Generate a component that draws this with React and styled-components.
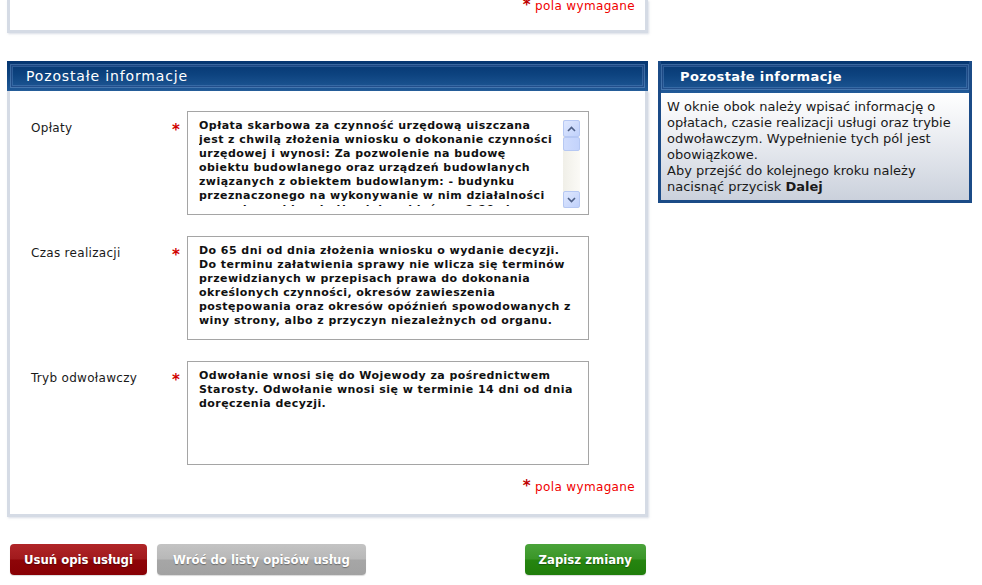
import styled, { createGlobalStyle } from "styled-components";

const GlobalStyle = createGlobalStyle`
  html, body {
    margin: 0;
    padding: 0;
    background: #ffffff;
    font-family: "DejaVu Sans", Verdana, sans-serif;
  }
`;

const fees = [
  "Opłata skarbowa za czynność urzędową uiszczana",
  "jest z chwilą złożenia wniosku o dokonanie czynności",
  "urzędowej i wynosi: Za pozwolenie na budowę",
  "obiektu budowlanego oraz urządzeń budowlanych",
  "związanych z obiektem budowlanym: - budynku",
  "przeznaczonego na wykonywanie w nim działalności",
  "gospodarczej innej niż rolnicza i leśna - 2,20 zł",
];

const time = [
  "Do 65 dni od dnia złożenia wniosku o wydanie decyzji.",
  "Do terminu załatwienia sprawy nie wlicza się terminów",
  "przewidzianych w przepisach prawa do dokonania",
  "określonych czynności, okresów zawieszenia",
  "postępowania oraz okresów opóźnień spowodowanych z",
  "winy strony, albo z przyczyn niezależnych od organu.",
];

const appeal = [
  "Odwołanie wnosi się do Wojewody za pośrednictwem",
  "Starosty. Odwołanie wnosi się w terminie 14 dni od dnia",
  "doręczenia decyzji.",
];

const App = () => {
  return (
    <>
      <GlobalStyle />
      <Page>
        <MainColumn>
          <TopPanel>
            <RequiredNote $top>
              <Star>*</Star> pola wymagane
            </RequiredNote>
          </TopPanel>

          <Panel>
            <Header>
              <HeaderInner>Pozostałe informacje</HeaderInner>
            </Header>
            <Body>
              <Row>
                <Label>Opłaty</Label>
                <ReqStar>*</ReqStar>
                <Field>
                  <FieldText $clip>
                    {fees.map((l) => (
                      <Line key={l}>{l}</Line>
                    ))}
                  </FieldText>
                  <Scrollbar>
                    <ScrollButton>
                      <svg width="9" height="6" viewBox="0 0 9 6">
                        <path d="M1 5 L4.5 1.5 L8 5" fill="none" stroke="#4d5f86" strokeWidth="1.6" />
                      </svg>
                    </ScrollButton>
                    <Thumb />
                    <Track />
                    <ScrollButton>
                      <svg width="9" height="6" viewBox="0 0 9 6">
                        <path d="M1 1 L4.5 4.5 L8 1" fill="none" stroke="#4d5f86" strokeWidth="1.6" />
                      </svg>
                    </ScrollButton>
                  </Scrollbar>
                </Field>
              </Row>
              <Row>
                <Label>Czas realizacji</Label>
                <ReqStar>*</ReqStar>
                <Field>
                  <FieldText>
                    {time.map((l) => (
                      <Line key={l}>{l}</Line>
                    ))}
                  </FieldText>
                </Field>
              </Row>
              <Row>
                <Label>Tryb odwoławczy</Label>
                <ReqStar>*</ReqStar>
                <Field>
                  <FieldText>
                    {appeal.map((l) => (
                      <Line key={l}>{l}</Line>
                    ))}
                  </FieldText>
                </Field>
              </Row>
              <RequiredNote>
                <Star>*</Star> pola wymagane
              </RequiredNote>
            </Body>
          </Panel>

          <Actions>
            <Button $variant="red">Usuń opis usługi</Button>
            <Button $variant="gray">Wróć do listy opisów usług</Button>
            <Button $variant="green" $push>
              Zapisz zmiany
            </Button>
          </Actions>
        </MainColumn>

        <SideBox>
          <SideHeader>
            <HeaderInner $side>Pozostałe informacje</HeaderInner>
          </SideHeader>
          <SideBody>
            <Line>W oknie obok należy wpisać informację o</Line>
            <Line>opłatach, czasie realizacji usługi oraz trybie</Line>
            <Line>odwoławczym. Wypełnienie tych pól jest</Line>
            <Line>obowiązkowe.</Line>
            <Line>Aby przejść do kolejnego kroku należy</Line>
            <Line>
              nacisnąć przycisk <b>Dalej</b>
            </Line>
          </SideBody>
        </SideBox>
      </Page>
    </>
  );
};

export default App;

const Page = styled.div`
  display: flex;
  align-items: flex-start;
  gap: 10px;
  padding-left: 7px;
  width: 982px;
  height: 585px;
  box-sizing: border-box;
  overflow: hidden;
`;

const MainColumn = styled.div`
  width: 641px;
  display: flex;
  flex-direction: column;
`;

const TopPanel = styled.div`
  height: 30px;
  border: 3px solid #d5dbe5;
  border-top: none;
  background: #fff;
  display: flex;
  justify-content: flex-end;
  padding-right: 10px;
  box-shadow: 1px 1px 2px rgba(180, 190, 205, 0.5);
`;

const RequiredNote = styled.div`
  font-size: 12px;
  line-height: 14px;
  letter-spacing: 0.35px;
  color: #f00000;
  text-align: right;
  margin-top: ${(p) => (p.$top ? "-2px" : "14px")};
  white-space: nowrap;
`;

const Star = styled.span`
  color: #c00000;
  font-weight: bold;
  font-size: 15px;
`;

const Panel = styled.div`
  margin-top: 28px;
  display: flex;
  flex-direction: column;
`;

const Header = styled.div`
  height: 30px;
  box-sizing: border-box;
  padding: 3px;
  background: linear-gradient(#053570 0%, #0d437f 45%, #215a98 100%);
`;

const HeaderInner = styled.div`
  height: 100%;
  box-sizing: border-box;
  border: 1px solid rgba(120, 160, 210, 0.45);
  box-shadow: inset 0 0 0 1px rgba(20, 60, 120, 0.6), inset 0 0 0 2px rgba(110, 150, 205, 0.35);
  color: #ffffff;
  font-weight: ${(p) => (p.$side ? "bold" : "normal")};
  font-size: ${(p) => (p.$side ? "13px" : "14px")};
  letter-spacing: ${(p) => (p.$side ? "0.4px" : "0.85px")};
  line-height: 22px;
  padding-left: ${(p) => (p.$side ? "18px" : "15px")};
  white-space: nowrap;
`;

const Body = styled.div`
  background: #fff;
  border: 3px solid #d5dbe5;
  border-top: none;
  padding: 20px 10px 20px 21px;
  display: flex;
  flex-direction: column;
  gap: 21px;
  box-shadow: 1px 1px 2px rgba(180, 190, 205, 0.5);

  & > ${RequiredNote} {
    margin-top: -7px;
  }
`;

const Row = styled.div`
  display: flex;
  align-items: flex-start;
`;

const Label = styled.div`
  width: 141px;
  margin-top: 10px;
  font-size: 12px;
  letter-spacing: 0.3px;
  line-height: 14px;
  color: #1a1a1a;
`;

const ReqStar = styled.div`
  width: 15px;
  margin-top: 12px;
  color: #d00000;
  font-weight: bold;
  font-size: 15px;
  line-height: 14px;
`;

const Field = styled.div`
  width: 402px;
  height: 104px;
  box-sizing: border-box;
  border: 1px solid #a5a5a5;
  padding: 7px 8px 0 11px;
  display: flex;
  justify-content: space-between;
  background: #fff;
`;

const FieldText = styled.div`
  font-size: 11px;
  line-height: 14px;
  letter-spacing: 0.45px;
  font-weight: bold;
  color: #111;
  height: ${(p) => (p.$clip ? "87px" : "auto")};
  overflow: hidden;
  white-space: nowrap;
`;

const Line = styled.div`
  white-space: nowrap;
`;

const Scrollbar = styled.div`
  width: 17px;
  height: 88px;
  margin-top: 1px;
  display: flex;
  flex-direction: column;
  background: linear-gradient(90deg, #f0efe8, #fbfaf6);
`;

const ScrollButton = styled.div`
  height: 17px;
  box-sizing: border-box;
  border: 1px solid #b6c8f3;
  border-radius: 2px;
  background: linear-gradient(135deg, #dfe8fe, #c0d1fb);
  display: flex;
  align-items: center;
  justify-content: center;
`;

const Thumb = styled.div`
  height: 14px;
  box-sizing: border-box;
  border: 1px solid #b6c8f3;
  border-radius: 2px;
  background: linear-gradient(90deg, #cfdcfd, #c3d3fc);
`;

const Track = styled.div`
  flex: 1;
`;

const Actions = styled.div`
  margin-top: 27px;
  display: flex;
  gap: 10px;
  padding: 0 2px 0 3px;
`;

const variants = {
  red: "linear-gradient(#b02528 0%, #a11a1d 48%, #8e0508 52%, #870004 100%)",
  gray: "linear-gradient(#c3c3c3 0%, #b8b8b8 48%, #a6a6a6 52%, #a2a2a2 100%)",
  green: "linear-gradient(#4aa33a 0%, #3a9628 48%, #268510 52%, #1f7d0a 100%)",
};

const Button = styled.button`
  height: 31px;
  border: none;
  border-radius: 4px;
  padding: 0 ${(p) => (p.$variant === "gray" ? "16px" : "14px")};
  margin-left: ${(p) => (p.$push ? "auto" : "0")};
  background: ${(p) => variants[p.$variant]};
  color: #ffffff;
  font-family: "DejaVu Sans Condensed", "Liberation Sans", sans-serif;
  font-weight: bold;
  font-size: 13px;
  line-height: 29px;
  text-shadow: 0 1px 1px rgba(0, 0, 0, 0.35);
  white-space: nowrap;
  cursor: pointer;
  box-shadow: 0 1px 1px rgba(0, 0, 0, 0.15);
`;

const SideBox = styled.div`
  margin-top: 61px;
  width: 314px;
  box-sizing: border-box;
  border: 3px solid #1b4b87;
  border-top: none;
  background: #1b4b87;
`;

const SideHeader = styled.div`
  height: 32px;
  box-sizing: border-box;
  padding: 3px 0 3px;
  background: linear-gradient(#053570 0%, #0d437f 45%, #215a98 100%);

  & > div {
    line-height: 24px;
  }
`;

const SideBody = styled.div`
  background: linear-gradient(#ffffff 0%, #eef0f4 35%, #cbd1dc 100%);
  padding: 6px 6px 5px;
  font-size: 13px;
  line-height: 16px;
  color: #1a1a1a;

  b {
    font-weight: bold;
  }
`;
